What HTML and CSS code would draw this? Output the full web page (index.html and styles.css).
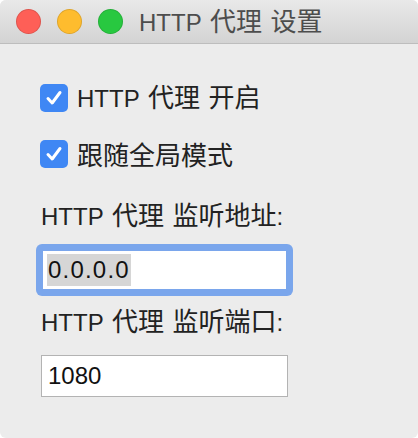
FILE: index.html
```html
<!DOCTYPE html>
<html lang="zh-CN">
<head>
    <meta charset="UTF-8">
    <meta name="viewport" content="width=device-width, initial-scale=1.0">
    <title>HTTP 代理 设置</title>
    <link rel="stylesheet" href="styles.css">
</head>
<body>
    <div class="window">
        <div class="titlebar">
            <span class="light red"></span>
            <span class="light yellow"></span>
            <span class="light green"></span>
            <span class="title">HTTP <span class="cjk">代理</span> <span class="cjk">设置</span></span>
        </div>

        <div class="content">
            <label class="check-row first">
                <span class="check">
                    <svg width="28" height="28" viewBox="0 0 28 28">
                        <path d="M8 14.5 L12.2 19 L20 8.5" fill="none" stroke="#fff" stroke-width="3" stroke-linecap="round" stroke-linejoin="round"/>
                    </svg>
                </span>
                <span>HTTP <span class="cjk">代理</span> <span class="cjk">开启</span></span>
            </label>

            <label class="check-row">
                <span class="check">
                    <svg width="28" height="28" viewBox="0 0 28 28">
                        <path d="M8 14.5 L12.2 19 L20 8.5" fill="none" stroke="#fff" stroke-width="3" stroke-linecap="round" stroke-linejoin="round"/>
                    </svg>
                </span>
                <span class="cjk">跟随全局模式</span>
            </label>

            <div class="field-label">HTTP <span class="cjk">代理</span> <span class="cjk">监听地址</span>:</div>
            <div class="field focused"><span class="selected">0.0.0.0</span></div>

            <div class="field-label">HTTP <span class="cjk">代理</span> <span class="cjk">监听端口</span>:</div>
            <div class="field">1080</div>
        </div>
    </div>
</body>
</html>
```

FILE: styles.css
```css
body {
    margin: 0;
    background: #fff;
    font-family: 'Liberation Sans', 'Noto Sans CJK SC', sans-serif;
}
.window {
    width: 418px;
    height: 438px;
    background: #ececec;
    border-radius: 6px;
    overflow: hidden;
}
.titlebar {
    height: 43px;
    display: flex;
    align-items: center;
    padding-left: 16px;
    background: linear-gradient(#e9e9e9, #d3d3d3);
    border-bottom: 1px solid #bdbdbd;
}
.light {
    width: 23px;
    height: 23px;
    border-radius: 50%;
    margin-right: 16px;
    border: 0.5px solid rgba(0,0,0,0.12);
}
.red { background: #fe5f57; }
.yellow { background: #febc2e; }
.green { background: #28c840; }
.title {
    font-size: 24px;
    word-spacing: 2px;
    color: #4d4d4d;
}
.cjk {
    font-family: 'Noto Sans CJK SC', sans-serif;
    font-size: 26px;
    line-height: 1;
}
.content {
    display: flex;
    flex-direction: column;
    align-items: flex-start;
    padding-left: 41px;
}
.check-row {
    display: flex;
    align-items: center;
    gap: 9px;
    height: 28px;
    margin-top: 28px;
    font-size: 24px;
    word-spacing: 2px;
    color: #222;
}
.check-row.first {
    margin-top: 40px;
}
.check {
    width: 28px;
    height: 28px;
    margin-left: -1px;
    border-radius: 5px;
    background: #3f87f4;
    display: flex;
}
.field-label {
    font-size: 24px;
    line-height: 30px;
    word-spacing: 2px;
    color: #222;
    margin-top: 33px;
}
.field-label + .field {
    margin-top: 17px;
}
.field + .field-label {
    margin-top: 16px;
}
.field {
    box-sizing: border-box;
    width: 247px;
    height: 42px;
    border: 1px solid #b3b3b3;
    background: #fff;
    font-size: 24px;
    line-height: 40px;
    padding-left: 6px;
    color: #111;
}
.field.focused {
    border: 2px solid #7aa6ec;
    border-radius: 2px;
    box-shadow: 0 0 0 5px #7aa6ec;
    line-height: 38px;
    padding-left: 4px;
}
.selected {
    background: #d6d6d6;
    padding: 2px 1px 3px 1px;
    letter-spacing: 1.2px;
}
```
